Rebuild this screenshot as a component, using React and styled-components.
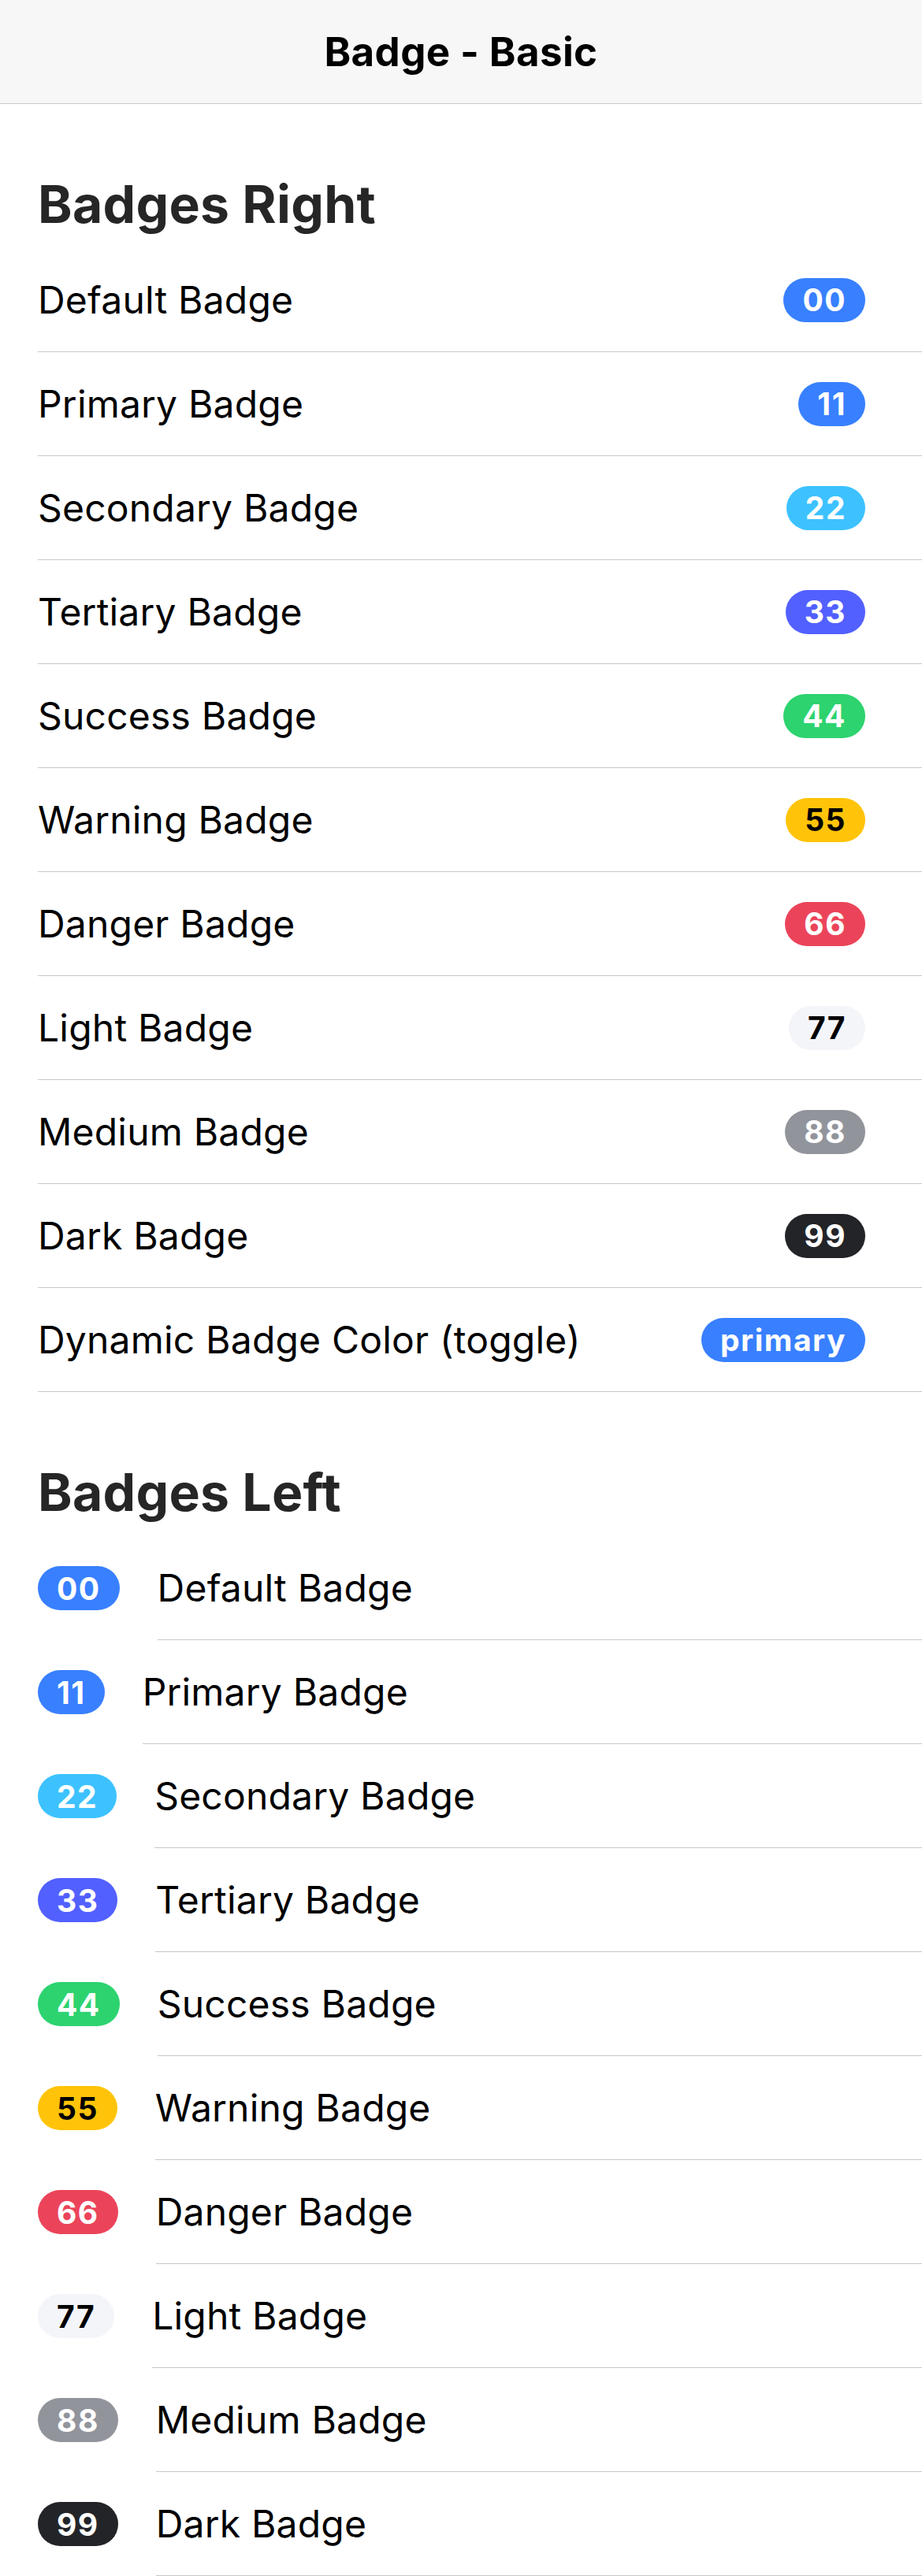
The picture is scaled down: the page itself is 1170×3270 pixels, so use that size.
import React from "react";
import styled, { createGlobalStyle } from "styled-components";

const colors = {
	primary: { bg: "#3880ff", fg: "#ffffff" },
	secondary: { bg: "#3dc2ff", fg: "#ffffff" },
	tertiary: { bg: "#5260ff", fg: "#ffffff" },
	success: { bg: "#2dd36f", fg: "#ffffff" },
	warning: { bg: "#ffc409", fg: "#000000" },
	danger: { bg: "#eb445a", fg: "#ffffff" },
	light: { bg: "#f4f5f8", fg: "#000000" },
	medium: { bg: "#92949c", fg: "#ffffff" },
	dark: { bg: "#222428", fg: "#ffffff" },
};

const items = [
	{ label: "Default Badge", value: "00", color: "primary" },
	{ label: "Primary Badge", value: "11", color: "primary" },
	{ label: "Secondary Badge", value: "22", color: "secondary" },
	{ label: "Tertiary Badge", value: "33", color: "tertiary" },
	{ label: "Success Badge", value: "44", color: "success" },
	{ label: "Warning Badge", value: "55", color: "warning" },
	{ label: "Danger Badge", value: "66", color: "danger" },
	{ label: "Light Badge", value: "77", color: "light" },
	{ label: "Medium Badge", value: "88", color: "medium" },
	{ label: "Dark Badge", value: "99", color: "dark" },
];

function App() {
	return (
		<>
			<GlobalStyle />
			<Page>
				<Toolbar>
					<ToolbarTitle>Badge - Basic</ToolbarTitle>
				</Toolbar>

				<SectionTitle>Badges Right</SectionTitle>
				<List>
					{items.map((item) => (
						<Row key={item.label}>
							<RowInner>
								<Label>{item.label}</Label>
								<Badge $color={item.color}>{item.value}</Badge>
							</RowInner>
						</Row>
					))}
					<Row>
						<RowInner>
							<Label>Dynamic Badge Color (toggle)</Label>
							<Badge $color="primary">primary</Badge>
						</RowInner>
					</Row>
				</List>

				<SectionTitle>Badges Left</SectionTitle>
				<List>
					{items.map((item) => (
						<Row key={item.label}>
							<Badge $color={item.color} $start>
								{item.value}
							</Badge>
							<RowInner $start>
								<Label>{item.label}</Label>
							</RowInner>
						</Row>
					))}
				</List>
			</Page>
		</>
	);
}

const GlobalStyle = createGlobalStyle`
	* {
		box-sizing: border-box;
	}

	body {
		margin: 0;
		background: #ffffff;
		font-family: Inter, "Noto Sans", "Liberation Sans", sans-serif;
		-webkit-font-smoothing: antialiased;
	}
`;

const Page = styled.div`
	width: 1170px;
	min-height: 3270px;
	background: #ffffff;
`;

const Toolbar = styled.header`
	height: 132px;
	display: flex;
	align-items: center;
	justify-content: center;
	background: #f7f7f7;
	border-bottom: 1px solid #c8c7cc;
`;

const ToolbarTitle = styled.h1`
	margin: 0;
	font-size: 51px;
	font-weight: 700;
	color: #000000;
	letter-spacing: 0.4px;
`;

const SectionTitle = styled.h2`
	margin: 0;
	height: 183px;
	padding: 0 48px 24px;
	display: flex;
	align-items: flex-end;
	font-size: 66px;
	line-height: 64px;
	font-weight: 700;
	color: #262626;
	letter-spacing: 0.3px;
`;

const List = styled.div`
	display: flex;
	flex-direction: column;
`;

const Row = styled.div`
	display: flex;
	align-items: center;
	padding-left: 48px;
	height: 132px;
`;

const RowInner = styled.div`
	flex: 1;
	height: 100%;
	display: flex;
	align-items: center;
	justify-content: space-between;
	padding-right: ${(p) => (p.$start ? "48px" : "72px")};
	border-bottom: 1px solid #c8c7cc;
`;

const Label = styled.span`
	font-size: 48px;
	font-weight: 400;
	color: #000000;
	white-space: nowrap;
	letter-spacing: 0.2px;
`;

const Badge = styled.span`
	display: inline-flex;
	align-items: center;
	justify-content: center;
	flex-shrink: 0;
	height: 56px;
	padding: 0 24px;
	margin-right: ${(p) => (p.$start ? "48px" : "0")};
	border-radius: 30px;
	background: ${(p) => colors[p.$color].bg};
	color: ${(p) => colors[p.$color].fg};
	font-size: 39px;
	line-height: 1;
	font-weight: 700;
	letter-spacing: 1.5px;
`;

export default App;
